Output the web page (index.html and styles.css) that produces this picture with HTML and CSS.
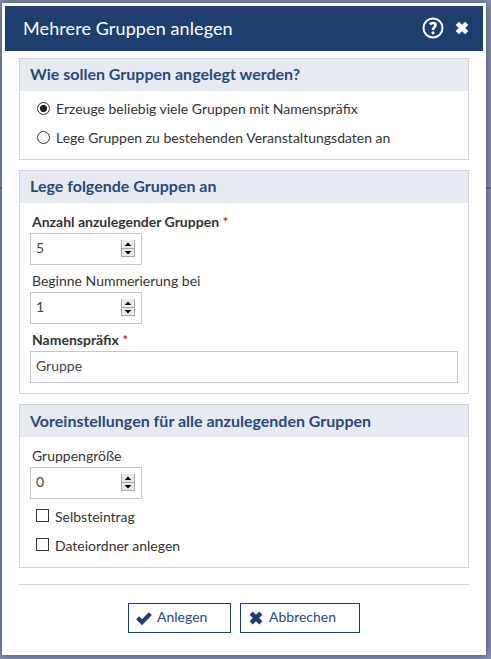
FILE: index.html
```html
<!DOCTYPE html>
<html lang="de">
<head>
    <meta charset="UTF-8">
    <title>Mehrere Gruppen anlegen</title>
    <link rel="stylesheet" href="styles.css">
</head>
<body>

    <div class="dialog">
        <div class="dialog-title">
            <h1>Mehrere Gruppen anlegen</h1>
            <svg class="help" width="22" height="22" viewBox="0 0 22 22">
                <circle cx="11" cy="11" r="9.5" fill="none" stroke="#fff" stroke-width="2"/>
                <path d="M7.8 7.3 Q9.3 6 11.2 6 Q13.5 6 13.5 8 Q13.5 9.4 12.1 10.5 Q11 11.3 11 13" fill="none" stroke="#fff" stroke-width="2.7"/>
                <circle cx="11" cy="15.8" r="1.6" fill="#fff"/>
            </svg>
            <svg class="close" width="14" height="14" viewBox="0 0 14 14">
                <path d="M2.3 2.3 L11.7 11.7 M11.7 2.3 L2.3 11.7" stroke="#fff" stroke-width="4.6"/>
            </svg>
        </div>

        <form class="content">
            <div class="fieldset modes">
                <h2>Wie sollen Gruppen angelegt werden?</h2>
                <label class="option"><input type="radio" name="mode" checked>Erzeuge beliebig viele Gruppen mit Namenspräfix</label>
                <label class="option"><input type="radio" name="mode">Lege Gruppen zu bestehenden Veranstaltungsdaten an</label>
            </div>

            <div class="fieldset groups">
                <h2>Lege folgende Gruppen an</h2>
                <label class="caption required" for="number">Anzahl anzulegender Gruppen <span>*</span></label>
                <div class="number">
                    <input type="text" id="number" value="5">
                    <svg class="spinner" width="14" height="17" viewBox="0 0 14 17"><use href="#spin"/></svg>
                </div>
                <label class="caption" for="startnumber">Beginne Nummerierung bei</label>
                <div class="number">
                    <input type="text" id="startnumber" value="1">
                    <svg class="spinner" width="14" height="17" viewBox="0 0 14 17"><use href="#spin"/></svg>
                </div>
                <label class="caption required" for="prefix">Namenspräfix <span>*</span></label>
                <input class="text" type="text" id="prefix" value="Gruppe">
            </div>

            <div class="fieldset defaults">
                <h2>Voreinstellungen für alle anzulegenden Gruppen</h2>
                <label class="caption" for="size">Gruppengröße</label>
                <div class="number">
                    <input type="text" id="size" value="0">
                    <svg class="spinner" width="14" height="17" viewBox="0 0 14 17">
                        <g id="spin">
                            <path d="M0 0H14V17H0Z" fill="#eaeaea"/>
                            <path d="M0.5 0V16.5H13.5V0M0.5 8.5H13.5" fill="none" stroke="#a8a8a8"/>
                            <path d="M3.6 6H10.4L7 2.6ZM3.6 11H10.4L7 14.4Z" fill="#000"/>
                        </g>
                    </svg>
                </div>
                <label class="option"><input type="checkbox">Selbsteintrag</label>
                <label class="option"><input type="checkbox">Dateiordner anlegen</label>
            </div>

            <div class="buttons">
                <button type="button" class="accept">
                    <svg width="16" height="14" viewBox="0 0 16 14"><path d="M1.6 6.8 L6 11.2 L14.4 2.6" fill="none" stroke="#1e3e70" stroke-width="4.2"/></svg>
                    Anlegen
                </button>
                <button type="button" class="cancel">
                    <svg width="14" height="14" viewBox="0 0 14 14"><path d="M2.2 2.2 L11.8 11.8 M11.8 2.2 L2.2 11.8" stroke="#1e3e70" stroke-width="4.5"/></svg>
                    Abbrechen
                </button>
            </div>
        </form>
    </div>

</body>
</html>
```
FILE: styles.css
```css
* {
    box-sizing: border-box;
}
body {
    margin: 0;
    padding: 3px 5px 4px 2px;
    height: 659px;
    overflow: hidden;
    background: linear-gradient(#8493b2 187px, #66748f 187px, #66748f 189px, #8493b2 189px);
    font-family: Lato, sans-serif;
    font-size: 14px;
    color: #333;
}
.dialog {
    height: 652px;
    padding: 3px;
    background-color: #fff;
    box-shadow: 0 0 8px rgba(0, 0, 0, 0.5);
}
.dialog-title {
    display: flex;
    align-items: center;
    height: 45px;
    padding: 0 14px 2px 18px;
    background-color: #1e3e70;
    color: #fff;
}
h1 {
    flex: 1;
    margin: 0;
    font-size: 18px;
    font-weight: normal;
    letter-spacing: 0.1px;
}
.close {
    margin-left: 11px;
}
.content {
    padding: 7px 14px 0;
}
.fieldset {
    margin-bottom: 10px;
    border: 1px solid #d0d3dc;
}
.modes {
    height: 102px;
}
.groups {
    height: 224px;
}
.defaults {
    height: 164px;
    margin-bottom: 16px;
}
h2 {
    height: 32px;
    margin: 0 0 4px;
    padding-left: 10px;
    background-color: #e7ebf1;
    color: #28497c;
    font-size: 16px;
    line-height: 30px;
}
.option {
    display: flex;
    align-items: center;
    height: 29px;
    padding-left: 16px;
}
.option input {
    appearance: none;
    width: 13px;
    height: 13px;
    margin: 0 6px 3px 0;
    border: 1px solid #333;
    background-color: #fff;
}
.modes .option {
    padding-bottom: 2px;
}
.option input[type=radio] {
    margin: 0 6px 1px 1px;
    border-radius: 50%;
}
.option input[type=radio]:checked {
    background: radial-gradient(circle, #222 3.2px, #fff 3.9px);
}
.groups h2, .defaults h2 {
    margin-bottom: 6px;
}
.defaults h2 {
    line-height: 31px;
}
.caption {
    display: block;
    height: 24px;
    padding-left: 12px;
    line-height: 26px;
}
.required {
    font-weight: bold;
}
.required span {
    color: #d60000;
    font-weight: normal;
}
.number {
    display: flex;
    align-items: center;
    width: 112px;
    height: 32px;
    margin: 0 0 3px 10px;
    padding-right: 6px;
    border: 1px solid #c5c7cc;
}
.number input {
    flex: 1;
    min-width: 0;
    padding: 0 0 3px 5px;
    border: none;
}
.spinner {
    margin-bottom: 1px;
}
input {
    font: inherit;
    color: #444;
}
.text {
    display: block;
    width: 428px;
    height: 32px;
    margin-left: 10px;
    padding: 0 5px 3px;
    border: 1px solid #c5c7cc;
}
.buttons {
    display: flex;
    justify-content: center;
    gap: 9px;
    padding-top: 18px;
    border-top: 1px solid #d0d3d8;
}
button {
    display: flex;
    align-items: center;
    gap: 5px;
    height: 30px;
    padding: 0 8px 3px 7px;
    border: 1px solid #1e3e70;
    background-color: #fff;
    color: #28497c;
    font: inherit;
}
button svg {
    margin-top: 3px;
}
.accept {
    width: 103px;
}
.cancel {
    width: 120px;
    gap: 6px;
    padding-left: 8px;
}
```
